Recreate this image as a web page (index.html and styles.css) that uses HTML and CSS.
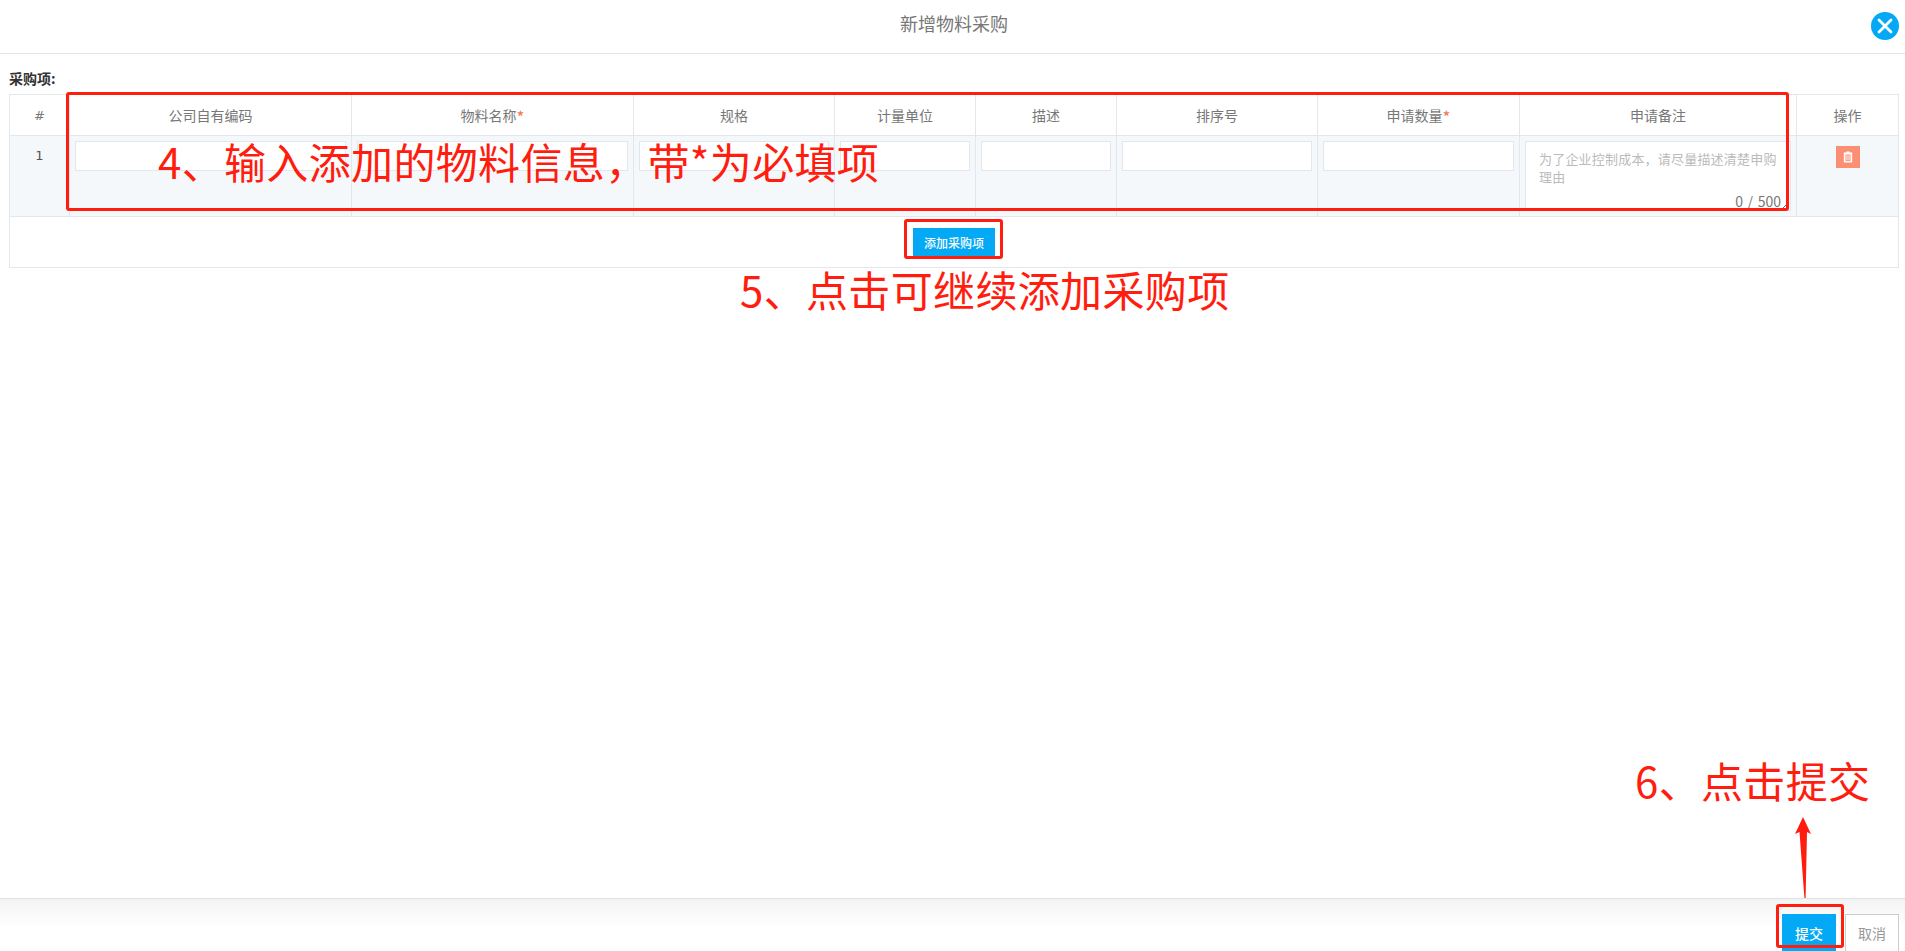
FILE: index.html
```html
<!DOCTYPE html>
<html lang="zh-CN">
  <head>
    <meta charset="UTF-8" />
    <meta name="viewport" content="width=device-width, initial-scale=1.0" />
    <title>新增物料采购</title>
    <link rel="stylesheet" href="styles.css">
  </head>
  <body>
    <header class="top-bar">
      <h1>新增物料采购</h1>
      <button class="close-button" aria-label="关闭">
        <svg viewBox="0 0 28 28" width="28" height="28">
          <circle cx="14" cy="14" r="14" fill="#03a9f4" />
          <path d="M8 8 L20 20 M20 8 L8 20" stroke="#fff" stroke-width="2.8" stroke-linecap="round" />
        </svg>
      </button>
    </header>

    <main class="content">
      <div class="section-label">采购项:</div>
      <table class="items">
        <colgroup>
          <col class="col-index" />
          <col class="col-code" />
          <col class="col-name" />
          <col class="col-spec" />
          <col class="col-unit" />
          <col class="col-desc" />
          <col class="col-sort" />
          <col class="col-qty" />
          <col class="col-note" />
          <col />
        </colgroup>
        <thead>
          <tr>
            <th class="num">#</th>
            <th>公司自有编码</th>
            <th>物料名称<span class="required">*</span></th>
            <th>规格</th>
            <th>计量单位</th>
            <th>描述</th>
            <th>排序号</th>
            <th>申请数量<span class="required">*</span></th>
            <th>申请备注</th>
            <th>操作</th>
          </tr>
        </thead>
        <tbody>
          <tr class="item-row">
            <td class="num row-num">1</td>
            <td><input type="text" /></td>
            <td><input type="text" /></td>
            <td><input type="text" /></td>
            <td><input type="text" /></td>
            <td><input type="text" /></td>
            <td><input type="text" /></td>
            <td><input type="text" /></td>
            <td>
              <div class="note-box">
                <textarea placeholder="为了企业控制成本，请尽量描述清楚申购理由"></textarea>
                <span class="counter">0 / 500</span>
              </div>
            </td>
            <td class="actions">
              <button class="delete-button" aria-label="删除">
                <svg viewBox="0 0 12 14" width="10" height="12">
                  <path d="M4 0.5 H8 V1.5 H11 V13.5 H1 V1.5 H4 Z" fill="#fff" />
                  <path d="M3 4 H9 V12 H3 Z" fill="#fb8f73" />
                  <path d="M4.5 5 V11 M6 5 V11 M7.5 5 V11" stroke="#fff" stroke-width="0.8" />
                </svg>
              </button>
            </td>
          </tr>
          <tr>
            <td colspan="10" class="add-cell">
              <button class="primary add-button">添加采购项</button>
            </td>
          </tr>
        </tbody>
      </table>
    </main>

    <footer class="bottom-bar">
      <button class="primary submit-button">提交</button>
      <button class="cancel-button">取消</button>
    </footer>

    <!-- screenshot annotations -->
    <div class="mark mark-fields"></div>
    <div class="mark mark-add"></div>
    <div class="mark mark-submit"></div>
    <div class="note note-fields">4、输入添加的物料信息，带*为必填项</div>
    <div class="note note-add">5、点击可继续添加采购项</div>
    <div class="note note-submit">6、点击提交</div>
    <svg class="arrow" viewBox="0 0 20 82" width="20" height="82">
      <path d="M10 0 L18 17 L14 15 L12.6 81 L11.4 81 L6.5 15 L2 17 Z" fill="#ff1d0f" />
    </svg>
  </body>
</html>
```

FILE: styles.css
```css
* {
  margin: 0;
  padding: 0;
  box-sizing: border-box;
}

html,
body {
  height: 100%;
  overflow: hidden;
}

body {
  font-family: "Noto Sans CJK SC", "Liberation Sans", sans-serif;
  background-color: #fff;
  color: #777;
  display: flex;
  flex-direction: column;
}

button {
  font-family: inherit;
  border: none;
  cursor: pointer;
}

.top-bar {
  height: 54px;
  flex: none;
  display: flex;
  align-items: center;
  justify-content: center;
  border-bottom: 1px solid #e4e4e4;
  position: relative;
  padding: 0 0 7px 3px;
}

.top-bar h1 {
  font-size: 18px;
  font-weight: 400;
  color: #777;
}

.close-button {
  position: absolute;
  top: 12px;
  right: 6px;
  width: 28px;
  height: 28px;
  background: none;
  display: block;
}

.content {
  flex: 1;
  padding: 15px 6px 0 9px;
}

.section-label {
  font-size: 14px;
  font-weight: 700;
  line-height: 18px;
  color: #333;
  margin-bottom: 7px;
}

.items {
  width: 1890px;
  table-layout: fixed;
  border-collapse: collapse;
}

.col-index { width: 60px; }
.col-code { width: 282px; }
.col-name { width: 282px; }
.col-spec { width: 201px; }
.col-unit { width: 141px; }
.col-desc { width: 141px; }
.col-sort { width: 201px; }
.col-qty { width: 202px; }
.col-note { width: 277px; }

.items th,
.items td {
  border: 1px solid #e3e6ea;
}

.items th {
  height: 41px;
  font-size: 14px;
  font-weight: 400;
  color: #777;
  text-align: center;
}

.items .num {
  font-family: "DejaVu Sans", sans-serif;
  font-size: 13px;
  text-align: center;
}

.required {
  font-size: 17px;
  line-height: 14px;
  vertical-align: -3px;
  color: #f5775a;
}

.item-row {
  height: 81px;
  background-color: #f5f8fb;
}

.item-row td {
  padding: 5px;
  vertical-align: top;
}

.item-row .row-num {
  padding-top: 12px;
  color: #555;
}

.item-row input {
  display: block;
  width: 100%;
  height: 30px;
  border: 1px solid #e3e6ea;
  background-color: #fff;
}

.note-box {
  position: relative;
  height: 70px;
}

.note-box textarea {
  display: block;
  width: 100%;
  height: 70px;
  padding: 8px 13px;
  border: 1px solid #e3e6ea;
  font-family: inherit;
  font-size: 13px;
  line-height: 17.5px;
  letter-spacing: 0.2px;
}

.note-box textarea::placeholder {
  color: #bbb;
}

.counter {
  position: absolute;
  right: 10px;
  bottom: 1px;
  font-size: 14px;
  line-height: 18px;
  word-spacing: 1.5px;
  color: #777;
}

.actions {
  text-align: center;
}

.delete-button {
  width: 24px;
  height: 22px;
  margin-top: 5px;
  background-color: #fb8f73;
  display: inline-flex;
  align-items: center;
  justify-content: center;
}

.add-cell {
  height: 51px;
  text-align: center;
  vertical-align: middle;
}

.primary {
  background-color: #03a9f4;
  color: #fff;
  font-weight: 500;
}

.add-button {
  width: 82px;
  height: 29px;
  font-size: 12px;
  display: block;
  margin: 0 auto;
}

.bottom-bar {
  height: 53px;
  flex: none;
  display: flex;
  justify-content: flex-end;
  align-items: flex-start;
  gap: 9px;
  padding: 15px 6px 0 0;
  border-top: 1px solid #e2e2e2;
  background: linear-gradient(#f3f3f3, #fff 55%);
}

.submit-button,
.cancel-button {
  width: 54px;
  height: 38px;
  font-size: 14px;
}

.cancel-button {
  background-color: #fff;
  color: #999;
  border: 1px solid #ccc;
}

/* Annotations */
.mark {
  position: absolute;
  border: 3px solid #ff1d0f;
  border-radius: 3px;
}

.mark-fields {
  left: 66px;
  top: 92px;
  width: 1723px;
  height: 119px;
}

.mark-add {
  left: 904px;
  top: 219px;
  width: 99px;
  height: 40px;
}

.mark-submit {
  left: 1776px;
  top: 904px;
  width: 68px;
  height: 44px;
}

.note {
  position: absolute;
  font-size: 42px;
  letter-spacing: 0.35px;
  line-height: 50px;
  color: #ff1d0f;
  white-space: nowrap;
}

.note-fields {
  left: 158px;
  top: 136px;
}

.note-add {
  left: 740px;
  top: 264px;
}

.note-submit {
  left: 1635px;
  top: 755px;
}

.arrow {
  position: absolute;
  left: 1793px;
  top: 817px;
}
```
